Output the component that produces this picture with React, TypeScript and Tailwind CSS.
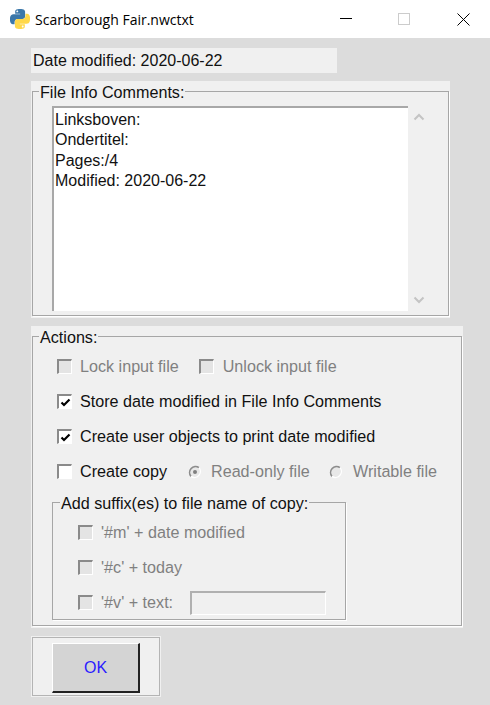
import React from 'react';

const Frame: React.FC<{ title: string; className?: string; children: React.ReactNode }> = ({ title, className, children }) => (
  <div className={`relative bg-[#f0f0f0] px-[1px] pb-[2px] pt-[10px] ${className ?? ''}`}>
    <span className="absolute left-[8px] top-[1px] z-10 bg-[#f0f0f0] pl-[1px] pr-[1px] text-[16.15px] leading-[20px]">{title}</span>
    <div className="h-full border border-[#a6a6a6] shadow-[1px_1px_0_#ffffff]">{children}</div>
  </div>
);

const CheckBox: React.FC<{ checked?: boolean; disabled?: boolean }> = ({ checked, disabled }) => (
  <span
    className={`flex h-[15px] w-[15px] shrink-0 items-center justify-center border-b border-l-2 border-r border-t-2 border-b-white border-l-[#8a8a8a] border-r-white border-t-[#8a8a8a] ${
      disabled ? 'bg-[#e4e4e4]' : 'bg-white'
    }`}
  >
    {checked && (
      <svg width="11" height="11" viewBox="0 0 11 11">
        <path d="M1.5 5.5 L4 8 L9.5 2.5" fill="none" stroke="#000" strokeWidth="2.2" />
      </svg>
    )}
  </span>
);

const Radio: React.FC<{ selected?: boolean }> = ({ selected }) => (
  <svg width="14" height="14" viewBox="0 0 14 14" className="shrink-0">
    <circle cx="7" cy="7" r="6" fill="#e8e8e8" />
    <path d="M11 2.6A6 6 0 0 0 3 11.4" fill="none" stroke="#8c8c8c" strokeWidth="1.6" />
    <path d="M3 11.4A6 6 0 0 0 11 2.6" fill="none" stroke="#ffffff" strokeWidth="1.4" />
    {selected && <circle cx="7" cy="7" r="2" fill="#808080" />}
  </svg>
);

const PythonLogo = () => (
  <svg width="20" height="20" viewBox="0 0 110 110" className="shrink-0">
    <path
      fill="#3c78aa"
      fillRule="evenodd"
      d="M54.9 0C50.3 0 46 .4 42.1 1.1 30.6 3.1 28.5 7.4 28.5 15.2V25.6H55.8V29H18.3C10.4 29 3.4 33.8 1.3 42.9-1.2 53.3-1.3 59.8 1.3 70.6 3.2 78.7 7.9 84.5 15.8 84.5H25.2V72C25.2 63 33 55 42.1 55H69.4C77 55 83 48.8 83 41.3V15.2C83 7.8 76.8 2.3 69.4 1.1 64.7.3 59.8 0 54.9 0ZM40.1 8.4c2.8 0 5.1 2.3 5.1 5.2 0 2.8-2.3 5.1-5.1 5.1-2.8 0-5.1-2.3-5.1-5.1 0-2.9 2.3-5.2 5.1-5.2Z"
    />
    <path
      fill="#ffd84a"
      fillRule="evenodd"
      transform="rotate(180 55 55)"
      d="M54.9 0C50.3 0 46 .4 42.1 1.1 30.6 3.1 28.5 7.4 28.5 15.2V25.6H55.8V29H18.3C10.4 29 3.4 33.8 1.3 42.9-1.2 53.3-1.3 59.8 1.3 70.6 3.2 78.7 7.9 84.5 15.8 84.5H25.2V72C25.2 63 33 55 42.1 55H69.4C77 55 83 48.8 83 41.3V15.2C83 7.8 76.8 2.3 69.4 1.1 64.7.3 59.8 0 54.9 0ZM40.1 8.4c2.8 0 5.1 2.3 5.1 5.2 0 2.8-2.3 5.1-5.1 5.1-2.8 0-5.1-2.3-5.1-5.1 0-2.9 2.3-5.2 5.1-5.2Z"
    />
  </svg>
);

export default function App() {
  return (
    <div className="flex h-[705px] w-[490px] flex-col overflow-hidden bg-[#dcdcdc] font-['Liberation_Sans',sans-serif] text-[16px] text-[#111111]">
      {/* title bar */}
      <div className="flex h-[38px] shrink-0 items-center bg-white pl-[10px]">
        <PythonLogo />
        <span className="ml-[5px] font-['Open_Sans',sans-serif] text-[14px] text-black">Scarborough Fair.nwctxt</span>
        <svg width="12" height="2" viewBox="0 0 12 2" className="ml-auto">
          <rect width="12" height="1" fill="#000" />
        </svg>
        <span className="ml-[46px] h-[12px] w-[12px] border border-[#cccccc]" />
        <svg width="13" height="13" viewBox="0 0 13 13" className="ml-[47px] mr-[20px]">
          <path d="M.5.5 12.5 12.5M12.5.5.5 12.5" stroke="#000" fill="none" />
        </svg>
      </div>

      <div className="flex flex-col pl-[31px]">
        <div className="mt-[10px] flex h-[25px] w-[306px] items-center bg-[#f0f0f0] pl-[2px] pt-[1px]">Date modified: 2020-06-22</div>

        <Frame title="File Info Comments:" className="mt-[8px] h-[237px] w-[419px]">
          <div className="ml-[19px] mt-[14px] flex h-[205px]">
            <div className="h-full w-[356px] border-l-2 border-t-2 border-[#a8a8a8] bg-white pl-[1px] pt-[2px] leading-[20.3px]">
              <div>Linksboven:</div>
              <div>Ondertitel:</div>
              <div>Pages:/4</div>
              <div>Modified: 2020-06-22</div>
            </div>
            <div className="flex w-[22px] flex-col items-center justify-between py-[7px]">
              <svg width="12" height="8" viewBox="0 0 12 8">
                <path d="M1.5 6.5 6 2 10.5 6.5" fill="none" stroke="#c4c4c4" strokeWidth="2" />
              </svg>
              <svg width="12" height="8" viewBox="0 0 12 8">
                <path d="M1.5 1.5 6 6 10.5 1.5" fill="none" stroke="#c4c4c4" strokeWidth="2" />
              </svg>
            </div>
          </div>
        </Frame>

        <Frame title="Actions:" className="mt-[8px] h-[302px] w-[432px]">
          <div className="flex flex-col pl-[24px] pt-[12px] text-[16.15px]">
            <div className="flex h-[35px] items-center text-[#808080]">
              <CheckBox disabled />
              <span className="ml-[8px]">Lock input file</span>
              <span className="ml-[20px]">
                <CheckBox disabled />
              </span>
              <span className="ml-[9px]">Unlock input file</span>
            </div>
            <div className="flex h-[35px] items-center">
              <CheckBox checked />
              <span className="ml-[8px]">Store date modified in File Info Comments</span>
            </div>
            <div className="flex h-[35px] items-center">
              <CheckBox checked />
              <span className="ml-[8px]">Create user objects to print date modified</span>
            </div>
            <div className="flex h-[35px] items-center">
              <CheckBox />
              <span className="ml-[8px] w-[108px]">Create copy</span>
              <Radio selected />
              <span className="ml-[9px] w-[118px] text-[#808080]">Read-only file</span>
              <Radio />
              <span className="ml-[10px] text-[#808080]">Writable file</span>
            </div>

            <div className="relative -ml-[5px] mt-[13px] h-[118px] w-[294px] border border-[#a6a6a6] shadow-[1px_1px_0_#ffffff]">
              <span className="absolute -top-[10px] left-[7px] bg-[#f0f0f0] pl-[1px] pr-[1px] leading-[20px]">
                Add suffix(es) to file name of copy:
              </span>
              <div className="flex flex-col pl-[25px] pt-[12px] text-[#808080]">
                <div className="flex h-[35px] items-center">
                  <CheckBox disabled />
                  <span className="ml-[8px]">'#m' + date modified</span>
                </div>
                <div className="flex h-[35px] items-center">
                  <CheckBox disabled />
                  <span className="ml-[8px]">'#c' + today</span>
                </div>
                <div className="flex h-[35px] items-center">
                  <CheckBox disabled />
                  <span className="ml-[8px] w-[81px]">'#v' + text:</span>
                  <span className="ml-[8px] h-[24px] w-[136px] border-b border-l-2 border-r border-t-2 border-b-white border-l-[#b0b0b0] border-r-white border-t-[#b0b0b0]" />
                </div>
              </div>
            </div>
          </div>
        </Frame>

        <div className="mt-[8px] h-[61px] w-[130px] bg-[#f0f0f0] p-[1px]">
          <div className="flex h-full w-full border border-[#b4b4b4] pl-[19px] pt-[5px]">
            <button className="flex h-[50px] w-[88px] items-center justify-center border-b-2 border-l border-r-2 border-t border-b-[#222222] border-l-white border-r-[#222222] border-t-white bg-[#d4d4d4] text-[#2a1cff]">
              OK
            </button>
          </div>
        </div>
      </div>
    </div>
  );
}
